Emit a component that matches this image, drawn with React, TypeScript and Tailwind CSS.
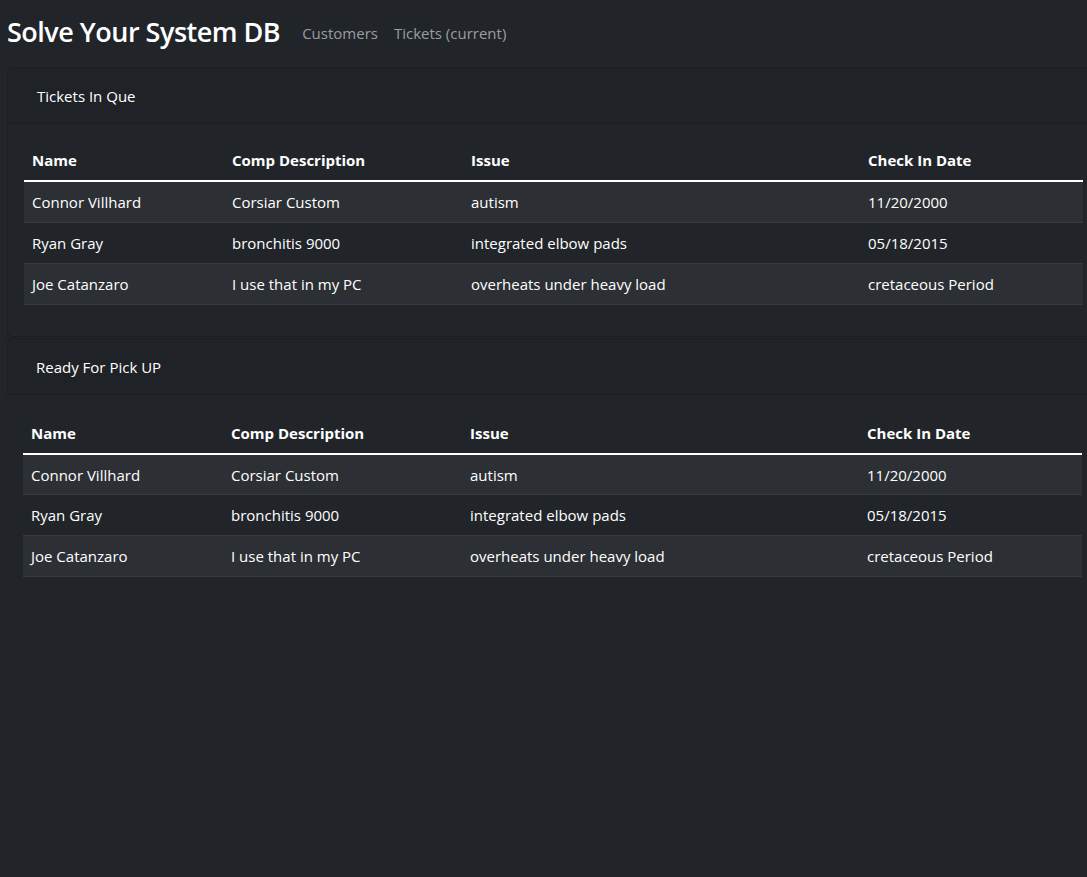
import React from 'react';

type Ticket = {
  name: string;
  comp: string;
  issue: string;
  date: string;
};

// Sample rows (shared by both tables)
const TICKETS: Ticket[] = [
  { name: 'Connor Villhard', comp: 'Corsiar Custom', issue: 'autism', date: '11/20/2000' },
  { name: 'Ryan Gray', comp: 'bronchitis 9000', issue: 'integrated elbow pads', date: '05/18/2015' },
  { name: 'Joe Catanzaro', comp: 'I use that in my PC', issue: 'overheats under heavy load', date: 'cretaceous Period' },
];

const TicketTable: React.FC<{ rows: Ticket[] }> = ({ rows }) => (
  <table className="w-[1059px] table-fixed border-collapse text-left text-[15px] text-white">
    <colgroup>
      <col className="w-[200px]" />
      <col className="w-[239px]" />
      <col className="w-[397px]" />
      <col className="w-[223px]" />
    </colgroup>
    <thead>
      <tr className="h-[40px] border-b-2 border-white font-bold">
        <th className="px-2 font-bold">Name</th>
        <th className="px-2 font-bold">Comp Description</th>
        <th className="px-2 font-bold">Issue</th>
        <th className="px-2 font-bold">Check In Date</th>
      </tr>
    </thead>
    <tbody>
      {rows.map((row, i) => (
        <tr
          key={row.name}
          className={`h-[41px] border-b border-[#373b3e] ${i % 2 === 0 ? 'bg-[#2c3034]' : 'bg-[#212529]'}`}
        >
          <td className="px-2 pt-px">{row.name}</td>
          <td className="px-2 pt-px">{row.comp}</td>
          <td className="px-2 pt-px">{row.issue}</td>
          <td className="px-2 pt-px">{row.date}</td>
        </tr>
      ))}
    </tbody>
  </table>
);

const App: React.FC = () => {
  return (
    <div className="min-h-[877px] w-full overflow-hidden bg-[#212529] font-['Open_Sans',sans-serif]">
      <nav className="flex h-[67px] items-center pb-[4px] pl-[7px]">
        <h1 className="text-[27px] font-semibold leading-none tracking-[-0.5px] text-white">Solve Your System DB</h1>
        <div className="ml-[22px] mt-[4px] flex gap-4 text-[15px] text-[#9a9da1]">
          <a>Customers</a>
          <a>Tickets (current)</a>
        </div>
      </nav>

      <section className="ml-[7px] w-[1093px] rounded-[5px] border border-[#1b1e21] bg-[#212529]">
        <div className="flex h-[56px] items-center border-b border-[#1b1e21] bg-[#1f2327] pl-[29px] pt-[2px] text-[15px] text-white">
          Tickets In Que
        </div>
        <div className="px-4 pb-[31px] pt-[17px]">
          <TicketTable rows={TICKETS} />
        </div>
      </section>

      <div className="ml-[7px] mt-px flex h-[57px] w-[1093px] items-center rounded-t-[5px] border border-[#1b1e21] bg-[#1f2327] pl-[28px] pt-[2px] text-[15px] text-white">
        Ready For Pick UP
      </div>
      <div className="ml-[23px] mt-[19px]">
        <TicketTable rows={TICKETS} />
      </div>
    </div>
  );
};

export default App;
